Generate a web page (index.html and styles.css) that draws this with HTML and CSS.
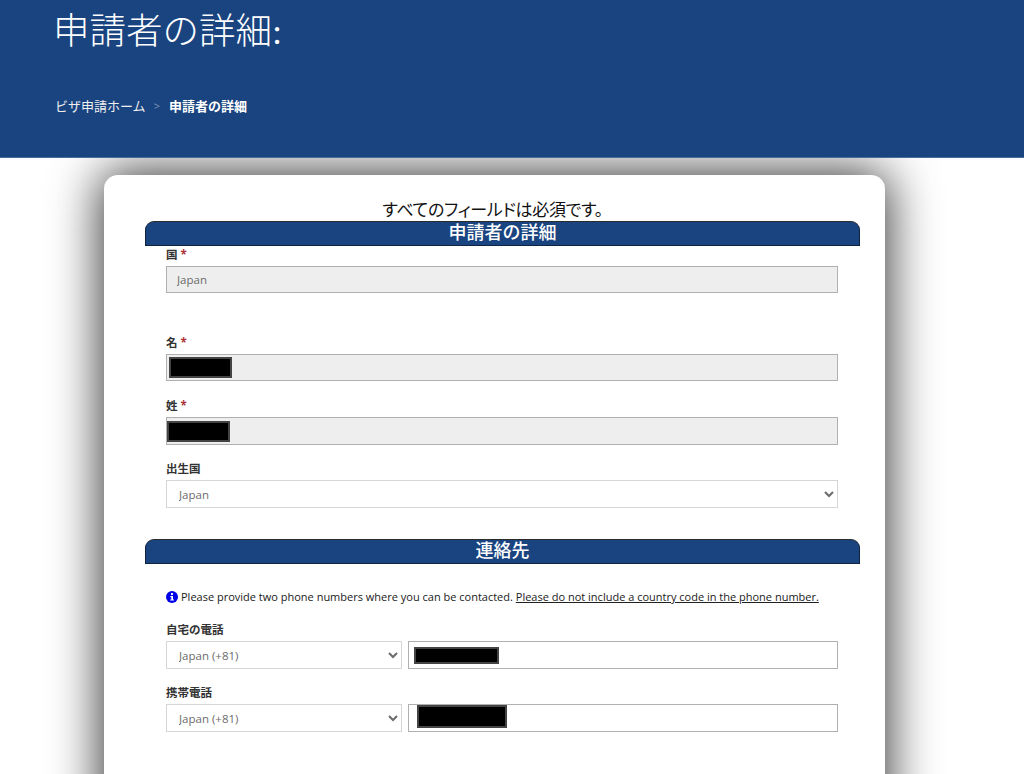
FILE: index.html
```html
<!DOCTYPE html>
<html lang="ja">
<head>
  <meta charset="UTF-8" />
  <meta name="viewport" content="width=device-width, initial-scale=1.0"/>
  <title>申請者の詳細</title>
  <link rel="stylesheet" href="styles.css">
</head>
<body>
  <header class="hero">
    <h1>申請者の詳細:</h1>
    <div class="crumbs">
      <a href="#">ビザ申請ホーム</a>
      <span class="crumb-sep">&gt;</span>
      <strong>申請者の詳細</strong>
    </div>
  </header>

  <main class="card">
    <p class="required-note">すべてのフィールドは必須です。</p>
    <h2 class="section-bar">申請者の詳細</h2>
    <div class="fields">
      <div class="field field-country">
        <label>国 <span class="req">*</span></label>
        <input class="text-input locked short" type="text" value="Japan" disabled>
      </div>
      <div class="field field-given">
        <label>名 <span class="req">*</span></label>
        <div class="text-input locked short"><span class="redact redact-given"></span></div>
      </div>
      <div class="field">
        <label>姓 <span class="req">*</span></label>
        <div class="text-input locked"><span class="redact redact-family"></span></div>
      </div>
      <div class="field">
        <label>出生国</label>
        <select class="select-input"><option>Japan</option></select>
      </div>
    </div>

    <h2 class="section-bar section-contact">連絡先</h2>
    <div class="fields">
      <div class="phone-note">
        <svg class="info-icon" viewBox="0 0 12 12" aria-hidden="true">
          <circle cx="6" cy="6" r="6" fill="#0000e6"/>
          <rect x="5" y="2" width="2" height="2" rx="0.5" fill="#fff"/>
          <path d="M4.3 5h2.7v3.4h1V9.6H4.2V8.4h1.1V6.2h-1z" fill="#fff"/>
        </svg>
        <p>Please provide two phone numbers where you can be contacted. <u>Please do not include a country code in the phone number.</u></p>
      </div>
      <div class="field">
        <label>自宅の電話</label>
        <div class="phone-row">
          <select class="select-input"><option>Japan (+81)</option></select>
          <div class="text-input"><span class="redact redact-home"></span></div>
        </div>
      </div>
      <div class="field">
        <label>携帯電話</label>
        <div class="phone-row">
          <select class="select-input"><option>Japan (+81)</option></select>
          <div class="text-input"><span class="redact redact-mobile"></span></div>
        </div>
      </div>
    </div>
  </main>
</body>
</html>
```

FILE: styles.css
```css
:root {
  --navy: #1a4480;
  --text: #212121;
  --input-text: #6b6b6b;
  --border: #b0b0b0;
  --border-light: #d6d6d6;
  --locked-bg: #eeeeee;
}

* {
  margin: 0;
  padding: 0;
  box-sizing: border-box;
}

html, body {
  height: 774px;
  overflow: hidden;
}

body {
  background: #fff;
  color: var(--text);
  font-family: "Open Sans", "Noto Sans CJK JP", sans-serif;
}

.hero {
  position: relative;
  z-index: 1;
  height: 158px;
  padding: 7px 53px 0;
  background: var(--navy);
  border-bottom: 1px solid #4a6c9c;
  color: #fff;
}

.hero h1 {
  font-family: "Liberation Serif", "Noto Sans CJK JP", serif;
  font-size: 36.5px;
  font-weight: 300;
  line-height: 50px;
}

.crumbs {
  display: flex;
  align-items: center;
  gap: 8px;
  margin-top: 31px;
  padding-left: 2px;
  font-size: 13px;
  line-height: 36px;
}

.crumbs a {
  color: #f0f0f0;
  text-decoration: none;
}

.crumb-sep {
  color: #7f95b5;
  margin-right: 1px;
  font-size: 11px;
}

.card {
  width: 781px;
  height: 700px;
  margin: 17px 0 0 104px;
  padding: 24px 25px 0 41px;
  background: #fff;
  border-radius: 14px;
  box-shadow: 0 0 50px 3px rgba(0, 0, 0, 0.8);
}

.required-note {
  padding-right: 20px;
  font-size: 17px;
  font-feature-settings: "palt";
  letter-spacing: -0.3px;
  line-height: 22px;
  text-align: center;
  color: #111;
}

.section-bar {
  height: 25px;
  background: var(--navy);
  border: 1px solid #10233f;
  border-top-color: #2b2b2b;
  border-radius: 9px 9px 0 0;
  color: #fff;
  font-size: 18px;
  font-weight: 500;
  line-height: 21px;
  text-align: center;
}

.section-contact {
  margin-top: 31px;
}

.fields {
  padding: 0 22px 0 21px;
}

.field {
  margin-bottom: 15px;
}

.field-country {
  margin-bottom: 41px;
}

.field-given {
  margin-bottom: 16px;
}

label {
  display: block;
  height: 20px;
  font-size: 11.5px;
  font-weight: 700;
  line-height: 17px;
  color: #333;
}

.req {
  color: #a33;
}

.text-input,
.select-input {
  display: flex;
  align-items: center;
  width: 100%;
  height: 28px;
  font-family: inherit;
  font-size: 11.5px;
  color: var(--input-text);
  background: #fff;
}

.text-input.short {
  height: 27px;
}

.text-input {
  border: 1px solid var(--border);
  padding: 0 2px;
}

input.text-input {
  padding: 0 10px;
}

.select-input {
  border: 1px solid var(--border-light);
  padding: 0 8px;
}

.locked {
  background: var(--locked-bg);
}

.redact {
  display: block;
  flex: none;
  background: #000;
  border: 2px solid #444;
}

.redact-given { width: 63px; height: 21px; }
.redact-family { width: 63px; height: 21px; margin-left: -2px; }
.redact-home { width: 85px; height: 17px; margin-left: 3px; }
.redact-mobile { width: 90px; height: 23px; margin: -3px 0 0 6px; }

.phone-note {
  display: flex;
  align-items: center;
  gap: 3px;
  margin: 24px 0 15px;
  font-size: 11px;
  line-height: 18px;
}

.info-icon {
  flex: none;
  width: 12px;
  height: 12px;
}

.phone-row {
  display: flex;
  gap: 6px;
}

.phone-row .select-input {
  flex: 0 0 236px;
  width: 236px;
}

.phone-row .text-input {
  flex: 1;
}
```
